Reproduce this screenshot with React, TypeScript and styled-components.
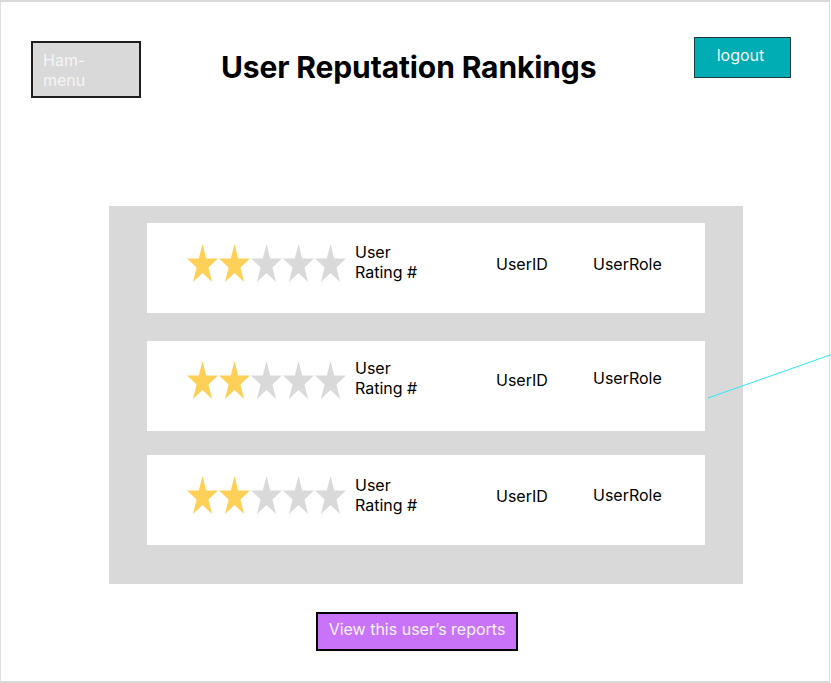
import React from "react";
import styled, { createGlobalStyle } from "styled-components";

const GlobalStyle = createGlobalStyle`
  html, body { margin: 0; padding: 0; background: #ffffff; }
  body { font-family: Inter, "Noto Sans", sans-serif; color: #000; }
`;

const Frame = styled.div`
  position: relative;
  width: 830px;
  height: 683px;
  box-sizing: border-box;
  border-top: 2px solid #d9d9d9;
  border-bottom: 2px solid #d9d9d9;
  border-left: 1px solid #e0e0e0;
  border-right: 1px solid #e0e0e0;
  overflow: visible;
`;

const Header = styled.header`
  height: 204px;
  box-sizing: border-box;
  display: flex;
  align-items: flex-start;
  padding: 35px 0 0 30px;
`;

const HamMenu = styled.button`
  margin-top: 4px;
  width: 110px;
  height: 57px;
  box-sizing: border-box;
  border: 2px solid #1e1e1e;
  background: #d9d9d9;
  color: #f5f5f5;
  font-family: Inter, sans-serif;
  font-size: 16px;
  line-height: 20px;
  text-align: left;
  padding: 7px 10px 0;
  display: flex;
  align-items: flex-start;
`;

const Title = styled.h1`
  margin: 12px 0 0 80px;
  font-family: Inter, sans-serif;
  font-weight: 700;
  font-size: 30px;
  letter-spacing: -0.12px;
  line-height: 36px;
  color: #000;
  white-space: nowrap;
`;

const LogoutButton = styled.button`
  margin-left: auto;
  margin-right: 38px;
  width: 97px;
  height: 41px;
  box-sizing: border-box;
  border: 1px solid #1e3a3c;
  background: #00adb5;
  color: #f5f5f5;
  font-family: Inter, sans-serif;
  font-size: 16px;
  line-height: 20px;
  padding: 7px 4px 0 0;
  display: flex;
  justify-content: center;
  align-items: flex-start;
`;

const Panel = styled.section`
  margin-left: 108px;
  width: 634px;
  height: 378px;
  box-sizing: border-box;
  background: #d9d9d9;
  padding: 17px 38px 0;
  display: flex;
  flex-direction: column;
`;

const Card = styled.div<{ $gap: number }>`
  margin-top: ${(p) => p.$gap}px;
  height: 90px;
  flex: none;
  background: #ffffff;
  box-sizing: border-box;
  padding: 0 0 10px 40px;
  display: grid;
  grid-template-columns: 168px 141px 97px auto;
  align-items: center;
  &:first-child { margin-top: 0; }
`;

const Stars = styled.div<{ $shift?: number }>`
  display: flex;
  gap: 1px;
  transform: translateY(${(p) => p.$shift ?? 0}px);
`;

const Label = styled.div<{ $shift?: number }>`
  font-family: Inter, sans-serif;
  font-size: 16px;
  line-height: 20px;
  color: #000;
  transform: translateY(${(p) => p.$shift ?? 0}px);
`;

const Footer = styled.div`
  padding: 28px 0 0 315px;
  display: flex;
`;

const ReportsButton = styled.button`
  width: 202px;
  height: 39px;
  box-sizing: border-box;
  border: 2px solid #000;
  background: #c973f9;
  color: #f5f5f5;
  font-family: Inter, sans-serif;
  font-size: 16px;
  line-height: 20px;
  padding: 5px 0 0;
  display: flex;
  justify-content: center;
  align-items: flex-start;
`;

const Connector = styled.svg`
  position: absolute;
  left: 706px;
  top: 351px;
  overflow: visible;
  pointer-events: none;
`;

const STAR_POINTS =
  "15.5,0 19.2,14.5 31,14.5 21.4,23.5 25.1,38 15.5,29 5.9,38 9.6,23.5 0,14.5 11.8,14.5";

function Star({ filled }: { filled: boolean }) {
  return (
    <svg width="31" height="38" viewBox="0 0 31 38">
      <polygon points={STAR_POINTS} fill={filled ? "#ffd058" : "#d9d9d9"} />
    </svg>
  );
}

function Rating({ value, shift }: { value: number; shift: number }) {
  return (
    <Stars $shift={shift}>
      {[0, 1, 2, 3, 4].map((i) => (
        <Star key={i} filled={i < value} />
      ))}
    </Stars>
  );
}

const rows = [
  { gap: 0, starShift: 0, ratingShift: -1, idShift: 1, roleShift: 1 },
  { gap: 28, starShift: -1, ratingShift: -3, idShift: -1, roleShift: -3 },
  { gap: 24, starShift: 0, ratingShift: 0, idShift: 1, roleShift: 0 },
];

export default function App() {
  return (
    <>
      <GlobalStyle />
      <Frame>
        <Header>
          <HamMenu>
            Ham-
            <br />
            menu
          </HamMenu>
          <Title>User Reputation Rankings</Title>
          <LogoutButton>logout</LogoutButton>
        </Header>
        <Panel>
          {rows.map((r, i) => (
            <Card key={i} $gap={r.gap}>
              <Rating value={2} shift={r.starShift} />
              <Label $shift={r.ratingShift}>
                User
                <br />
                Rating #
              </Label>
              <Label $shift={r.idShift}>UserID</Label>
              <Label $shift={r.roleShift}>UserRole</Label>
            </Card>
          ))}
        </Panel>
        <Footer>
          <ReportsButton>View this user’s reports</ReportsButton>
        </Footer>
        <Connector width="126" height="46">
          <line x1="1" y1="45" x2="126" y2="1" stroke="#2ee8f6" strokeWidth="1" />
        </Connector>
      </Frame>
    </>
  );
}
